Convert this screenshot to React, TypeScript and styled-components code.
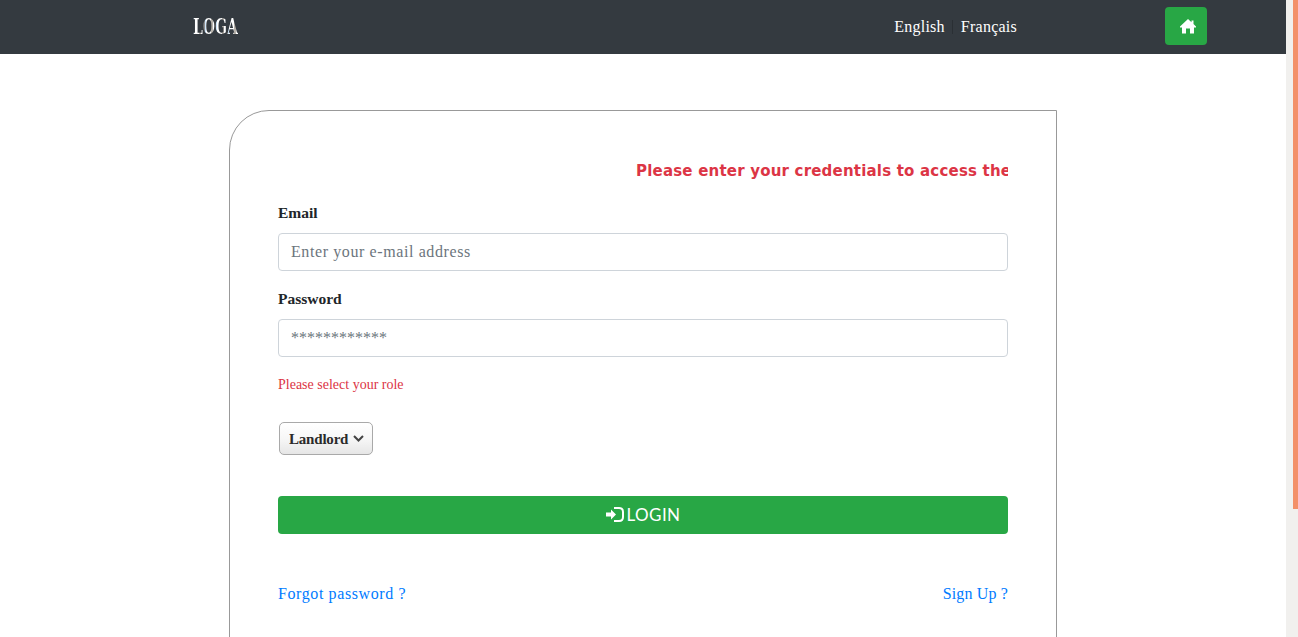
import React from "react";
import styled, { createGlobalStyle } from "styled-components";

const serif = `"Liberation Serif", "DejaVu Serif", serif`;

const GlobalStyle = createGlobalStyle`
  body {
    margin: 0;
    background: #ffffff;
    font-family: ${serif};
  }
`;

const Frame = styled.div`
  height: 100vh;
  display: flex;
  overflow: hidden;
`;

const Page = styled.div`
  flex: 1;
  min-width: 0;
`;

const ScrollTrack = styled.div`
  width: 12px;
  flex-shrink: 0;
  background: #f1f0ee;
  display: flex;
  justify-content: flex-end;
`;

const ScrollThumb = styled.div`
  width: 5px;
  height: 509px;
  background: #f39069;
`;

const Navbar = styled.nav`
  height: 54px;
  background: #343a40;
  display: flex;
  align-items: center;
  padding-left: 193px;
  padding-right: 79px;
`;

const Logo = styled.span`
  display: inline-block;
  font-family: "DejaVu Serif", serif;
  font-weight: 700;
  font-size: 14px;
  line-height: 17px;
  transform: scaleY(1.55);
  color: transparent;
  background: repeating-linear-gradient(
    90deg,
    #cfe6fb 0 1px,
    #ffffff 1px 6px,
    #b9b4ad 6px 8px,
    #ffffff 8px 10px,
    #8f8f8f 10px 11.5px
  );
  background-clip: text;
  -webkit-background-clip: text;
`;

const Languages = styled.div`
  margin-left: auto;
  display: flex;
  align-items: center;
  margin-right: 148px;
`;

const LangLink = styled.a`
  color: #ffffff;
  font-size: 16px;
  letter-spacing: 0.25px;
`;

const LangDivider = styled.span`
  width: 1px;
  height: 14px;
  margin: 0 7.5px;
  background: #2a2f34;
`;

const HomeButton = styled.button`
  width: 42px;
  height: 38px;
  margin-top: -2px;
  border: none;
  border-radius: 4px;
  background: #28a745;
  color: #ffffff;
  display: flex;
  align-items: center;
  justify-content: center;
  padding: 0 0 0 4px;
`;

const Main = styled.main`
  padding-top: 56px;
  padding-left: 229px;
  height: 743px;
  box-sizing: border-box;
`;

const Card = styled.section`
  width: 828px;
  height: 100%;
  box-sizing: border-box;
  border: 1px solid #999999;
  border-top-left-radius: 40px;
  padding: 48px;
`;

const Marquee = styled.div`
  overflow: hidden;
  white-space: nowrap;
  padding-left: 358px;
  height: 24px;
  line-height: 24px;
  font-family: "DejaVu Sans", sans-serif;
  font-size: 15px;
  font-weight: 700;
  letter-spacing: 0.2px;
  color: #dc3545;
`;

const Field = styled.div<{ $top: number }>`
  display: flex;
  flex-direction: column;
  margin-top: ${(p) => p.$top}px;
`;

const Label = styled.label`
  font-weight: 700;
  font-size: 15.5px;
  line-height: 23px;
  color: #212529;
  margin-bottom: 9px;
`;

const Input = styled.input<{ $spacing: number }>`
  height: 38px;
  box-sizing: border-box;
  border: 1px solid #ced4da;
  border-radius: 4px;
  padding: 6px 12px;
  font-family: ${serif};
  font-size: 16px;
  letter-spacing: ${(p) => p.$spacing}px;
  color: #495057;
  &::placeholder {
    color: #6c757d;
    opacity: 1;
  }
`;

const RoleError = styled.p`
  margin: 18px 0 0;
  font-size: 14px;
  line-height: 20px;
  color: #dc3545;
`;

const SelectWrap = styled.div`
  position: relative;
  width: 94px;
  margin: 27px 0 0 1px;
`;

const RoleSelect = styled.select`
  display: block;
  appearance: none;
  width: 100%;
  height: 33px;
  box-sizing: border-box;
  padding: 0 0 0 9px;
  border: 1px solid #a9a9a9;
  border-radius: 5px;
  background: linear-gradient(180deg, #ffffff 0%, #f7f7f7 50%, #e6e6e6 100%);
  font-family: ${serif};
  font-size: 15px;
  font-weight: 700;
  letter-spacing: -0.2px;
  color: #2b2b2b;
`;

const SelectChevron = styled.svg`
  position: absolute;
  right: 9px;
  top: 13px;
  width: 11px;
  height: 7px;
  pointer-events: none;
`;

const LoginButton = styled.button`
  width: 100%;
  height: 38px;
  margin-top: 41px;
  border: none;
  border-radius: 4px;
  background: #28a745;
  color: #ffffff;
  display: flex;
  align-items: center;
  justify-content: center;
  gap: 3px;
  padding: 0 0 2px;
  font-family: "Lato", sans-serif;
  font-size: 17px;
  letter-spacing: 0.4px;
`;

const LinkRow = styled.div`
  display: flex;
  justify-content: space-between;
  margin-top: 48px;
`;

const TextLink = styled.a<{ $spacing: number }>`
  color: #007bff;
  font-size: 16px;
  line-height: 24px;
  letter-spacing: ${(p) => p.$spacing}px;
`;

export default function App() {
  return (
    <Frame>
      <GlobalStyle />
      <Page>
        <Navbar>
          <Logo>LOGA</Logo>
          <Languages>
            <LangLink>English</LangLink>
            <LangDivider />
            <LangLink>Français</LangLink>
          </Languages>
          <HomeButton aria-label="Home">
            <svg width="16" height="16" viewBox="0 0 16 16" fill="currentColor">
              <path d="M8 1 L11.5 4.2 V2.5 H13.5 V6 L16 8.6 V9.5 H14 V15.5 H10 V10.5 H6 V15.5 H2 V9.5 H0 V8.6 Z" />
            </svg>
          </HomeButton>
        </Navbar>
        <Main>
          <Card>
            <Marquee>Please enter your credentials to access the platform</Marquee>
            <Field $top={18}>
              <Label>Email</Label>
              <Input $spacing={0.6} placeholder="Enter your e-mail address" />
            </Field>
            <Field $top={16}>
              <Label>Password</Label>
              <Input $spacing={0} placeholder="************" />
            </Field>
            <RoleError>Please select your role</RoleError>
            <SelectWrap>
              <RoleSelect defaultValue="Landlord">
                <option>Landlord</option>
                <option>Tenant</option>
              </RoleSelect>
              <SelectChevron viewBox="0 0 11 7" fill="none" stroke="#444444" strokeWidth="2">
                <path d="M1 1 L5.5 5.5 L10 1" />
              </SelectChevron>
            </SelectWrap>
            <LoginButton>
              <svg width="18" height="15" viewBox="0 0 18 15">
                <path fill="currentColor" d="M0 5.5 H5 V2.5 L10 7.5 L5 12.5 V9.5 H0 Z" />
                <path
                  fill="none"
                  stroke="currentColor"
                  strokeWidth="2"
                  d="M8 1 H13 Q17 1 17 5 V10 Q17 14 13 14 H8"
                />
              </svg>
              LOGIN
            </LoginButton>
            <LinkRow>
              <TextLink $spacing={0.6}>Forgot password ?</TextLink>
              <TextLink $spacing={0.15}>Sign Up ?</TextLink>
            </LinkRow>
          </Card>
        </Main>
      </Page>
      <ScrollTrack>
        <ScrollThumb />
      </ScrollTrack>
    </Frame>
  );
}
